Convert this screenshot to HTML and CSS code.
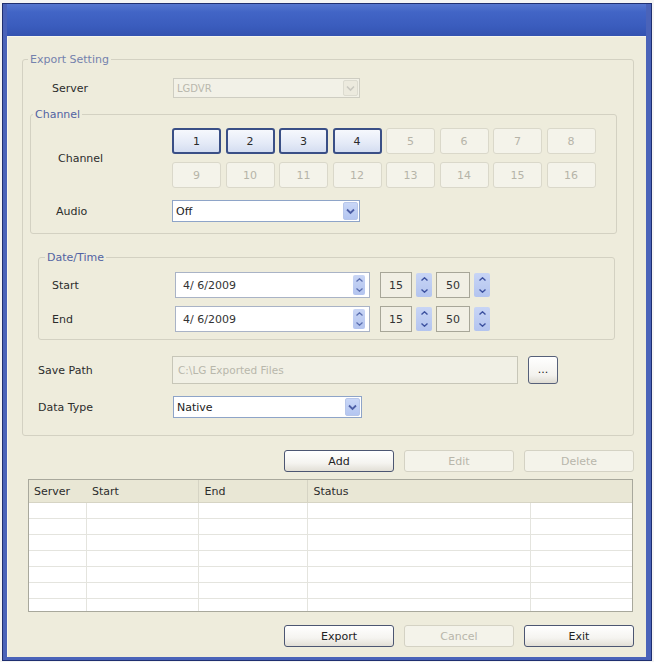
FILE: index.html
```html
<!DOCTYPE html>
<html>
<head>
<meta charset="utf-8">
<link rel="stylesheet" href="styles.css">
</head>
<body>
<div class="window">
  <div class="titlebar"></div>
  <div class="client">
    <fieldset class="group group-outer">
      <legend class="legend legend-faint">Export Setting</legend>
      <div class="row row-server">
        <span class="label label-server">Server</span>
        <div class="combo combo-disabled combo-server">
          <span class="combo-text">LGDVR</span>
          <span class="combo-btn"><svg width="9" height="7" viewBox="0 0 9 7"><path d="M1 1.5 L4.5 5 L8 1.5" fill="none" stroke="#c9c8c0" stroke-width="1.6"/></svg></span>
        </div>
      </div>

      <fieldset class="group group-channel">
        <legend class="legend">Channel</legend>
        <div class="row row-channels">
          <span class="label label-channel">Channel</span>
          <div class="channel-grid">
            <button class="ch ch-on">1</button>
            <button class="ch ch-on">2</button>
            <button class="ch ch-on">3</button>
            <button class="ch ch-on">4</button>
            <button class="ch ch-off">5</button>
            <button class="ch ch-off">6</button>
            <button class="ch ch-off">7</button>
            <button class="ch ch-off">8</button>
            <button class="ch ch-off">9</button>
            <button class="ch ch-off">10</button>
            <button class="ch ch-off">11</button>
            <button class="ch ch-off">12</button>
            <button class="ch ch-off">13</button>
            <button class="ch ch-off">14</button>
            <button class="ch ch-off">15</button>
            <button class="ch ch-off">16</button>
          </div>
        </div>
        <div class="row row-audio">
          <span class="label label-audio">Audio</span>
          <div class="combo combo-audio">
            <span class="combo-text">Off</span>
            <span class="combo-btn combo-btn-blue"><svg width="9" height="7" viewBox="0 0 9 7"><path d="M1 1.5 L4.5 5 L8 1.5" fill="none" stroke="#4d5fa6" stroke-width="1.8"/></svg></span>
          </div>
        </div>
      </fieldset>

      <fieldset class="group group-date">
        <legend class="legend legend-date">Date/Time</legend>
        <div class="row row-dt row-start">
          <span class="label label-dt">Start</span>
          <div class="datefield">
            <span class="date-text">4/ 6/2009</span>
            <span class="spin spin-inner">
              <span class="spin-half"><svg width="7" height="4" viewBox="0 0 7 4"><path d="M0.5 3.5 L3.5 0.8 L6.5 3.5" fill="none" stroke="#5b6fb0" stroke-width="1.3"/></svg></span>
              <span class="spin-half"><svg width="7" height="4" viewBox="0 0 7 4"><path d="M0.5 0.5 L3.5 3.2 L6.5 0.5" fill="none" stroke="#5b6fb0" stroke-width="1.3"/></svg></span>
            </span>
          </div>
          <div class="numfield num-hour">15</div>
          <span class="spin spin-outer">
            <span class="spin-half"><svg width="7" height="4" viewBox="0 0 7 4"><path d="M0.5 3.5 L3.5 0.8 L6.5 3.5" fill="none" stroke="#3d52a0" stroke-width="1.4"/></svg></span>
            <span class="spin-half"><svg width="7" height="4" viewBox="0 0 7 4"><path d="M0.5 0.5 L3.5 3.2 L6.5 0.5" fill="none" stroke="#3d52a0" stroke-width="1.4"/></svg></span>
          </span>
          <div class="numfield num-min">50</div>
          <span class="spin spin-outer">
            <span class="spin-half"><svg width="7" height="4" viewBox="0 0 7 4"><path d="M0.5 3.5 L3.5 0.8 L6.5 3.5" fill="none" stroke="#3d52a0" stroke-width="1.4"/></svg></span>
            <span class="spin-half"><svg width="7" height="4" viewBox="0 0 7 4"><path d="M0.5 0.5 L3.5 3.2 L6.5 0.5" fill="none" stroke="#3d52a0" stroke-width="1.4"/></svg></span>
          </span>
        </div>
        <div class="row row-dt row-end">
          <span class="label label-dt">End</span>
          <div class="datefield">
            <span class="date-text">4/ 6/2009</span>
            <span class="spin spin-inner">
              <span class="spin-half"><svg width="7" height="4" viewBox="0 0 7 4"><path d="M0.5 3.5 L3.5 0.8 L6.5 3.5" fill="none" stroke="#5b6fb0" stroke-width="1.3"/></svg></span>
              <span class="spin-half"><svg width="7" height="4" viewBox="0 0 7 4"><path d="M0.5 0.5 L3.5 3.2 L6.5 0.5" fill="none" stroke="#5b6fb0" stroke-width="1.3"/></svg></span>
            </span>
          </div>
          <div class="numfield num-hour">15</div>
          <span class="spin spin-outer">
            <span class="spin-half"><svg width="7" height="4" viewBox="0 0 7 4"><path d="M0.5 3.5 L3.5 0.8 L6.5 3.5" fill="none" stroke="#3d52a0" stroke-width="1.4"/></svg></span>
            <span class="spin-half"><svg width="7" height="4" viewBox="0 0 7 4"><path d="M0.5 0.5 L3.5 3.2 L6.5 0.5" fill="none" stroke="#3d52a0" stroke-width="1.4"/></svg></span>
          </span>
          <div class="numfield num-min">50</div>
          <span class="spin spin-outer">
            <span class="spin-half"><svg width="7" height="4" viewBox="0 0 7 4"><path d="M0.5 3.5 L3.5 0.8 L6.5 3.5" fill="none" stroke="#3d52a0" stroke-width="1.4"/></svg></span>
            <span class="spin-half"><svg width="7" height="4" viewBox="0 0 7 4"><path d="M0.5 0.5 L3.5 3.2 L6.5 0.5" fill="none" stroke="#3d52a0" stroke-width="1.4"/></svg></span>
          </span>
        </div>
      </fieldset>

      <div class="row row-path">
        <span class="label label-path">Save Path</span>
        <div class="pathfield">C:\LG Exported Files</div>
        <button class="btn btn-browse">...</button>
      </div>
      <div class="row row-type">
        <span class="label label-type">Data Type</span>
        <div class="combo combo-type">
          <span class="combo-text">Native</span>
          <span class="combo-btn combo-btn-blue"><svg width="9" height="7" viewBox="0 0 9 7"><path d="M1 1.5 L4.5 5 L8 1.5" fill="none" stroke="#4d5fa6" stroke-width="1.8"/></svg></span>
        </div>
      </div>
    </fieldset>

    <div class="btn-row btn-row-top">
      <button class="btn btn-on">Add</button>
      <button class="btn btn-off">Edit</button>
      <button class="btn btn-off">Delete</button>
    </div>

    <div class="list">
      <table class="list-table">
        <colgroup>
          <col class="col-server"><col class="col-start"><col class="col-end"><col class="col-status"><col class="col-extra">
        </colgroup>
        <thead>
          <tr><th class="th-server">Server</th><th>Start</th><th class="th-div">End</th><th class="th-div">Status</th><th class="th-last"></th></tr>
        </thead>
        <tbody>
          <tr><td></td><td></td><td></td><td></td><td></td></tr>
          <tr><td></td><td></td><td></td><td></td><td></td></tr>
          <tr><td></td><td></td><td></td><td></td><td></td></tr>
          <tr><td></td><td></td><td></td><td></td><td></td></tr>
          <tr><td></td><td></td><td></td><td></td><td></td></tr>
          <tr><td></td><td></td><td></td><td></td><td></td></tr>
          <tr><td></td><td></td><td></td><td></td><td></td></tr>
        </tbody>
      </table>
    </div>

    <div class="btn-row btn-row-bottom">
      <button class="btn btn-on">Export</button>
      <button class="btn btn-off">Cancel</button>
      <button class="btn btn-on">Exit</button>
    </div>
  </div>
</div>
</body>
</html>
```

FILE: styles.css
```css
html, body {
  margin: 0;
  padding: 0;
  background: #f4f4f4;
}
body {
  padding: 3px 0 0 2px;
  font-family: "DejaVu Sans", "Liberation Sans", sans-serif;
  font-size: 11px;
  color: #2a2a2a;
}
.window {
  width: 650px;
  height: 658px;
  box-sizing: border-box;
  border: 1px solid #1f2f70;
  background: #4a63b9;
  padding: 0 5px 3px 4px;
  display: flex;
  flex-direction: column;
}
.titlebar {
  height: 32px;
  flex: none;
  background: linear-gradient(180deg, #5676cf 0%, #4265c6 25%, #3a5cbd 70%, #3453b0 100%);
}
.client {
  flex: 1;
  background: #eeecdc;
  padding-top: 17px;
  box-sizing: border-box;
  box-shadow: inset 1px 1px 0 #f7f6ec;
}

/* group boxes */
.group {
  margin: 0;
  padding: 0;
  border: 1px solid #d3d1c2;
  border-radius: 3px;
  box-sizing: border-box;
  min-width: 0;
}
.legend {
  padding: 0 2px;
  line-height: 13px;
  height: 13px;
  font-size: 11px;
  color: #5263a3;
}
.legend-faint {
  color: #7482ad;
  margin-left: 5px;
}
.group-outer {
  margin-left: 15px;
  width: 612px;
  padding-bottom: 17px;
}
.group-channel {
  margin: 10px 0 0 7px;
  width: 587px;
  padding-top: 7px;
  padding-bottom: 11px;
}
.group-channel .legend {
  margin-left: 2px;
}
.group-date {
  margin: 17px 0 0 15px;
  width: 577px;
  padding-top: 8px;
  padding-bottom: 7px;
}
.legend-date {
  margin-left: 6px;
}

/* rows */
.row {
  display: flex;
  align-items: center;
}
.label {
  flex: none;
  color: #2c2c2c;
}
.row-server {
  margin-top: 12px;
  height: 20px;
  padding-left: 29px;
}
.label-server { width: 121px; }
.row-channels {
  padding-left: 27px;
}
.label-channel { width: 114px; }
.row-audio {
  margin-top: 12px;
  height: 22px;
  padding-left: 25px;
}
.label-audio { width: 116px; }
.row-dt {
  height: 26px;
  padding-left: 13px;
}
.row-end { margin-top: 8px; }
.label-dt { width: 123px; }
.row-path {
  margin-top: 16px;
  height: 28px;
  padding-left: 15px;
}
.label-path { width: 134px; }
.row-type {
  margin-top: 12px;
  height: 22px;
  padding-left: 15px;
}
.label-type { width: 135px; }

/* combos */
.combo {
  display: flex;
  align-items: center;
  box-sizing: border-box;
  height: 100%;
  border: 1px solid #8ea4c8;
  background: #ffffff;
  padding: 1px;
}
.combo-text {
  flex: 1;
  padding-left: 2px;
  color: #222;
}
.combo-btn {
  flex: none;
  width: 15px;
  height: 100%;
  display: flex;
  align-items: center;
  justify-content: center;
  border-radius: 2px;
}
.combo-btn-blue {
  background: linear-gradient(180deg, #c9d7f7 0%, #b4c6f1 100%);
  border: 1px solid #b7c6ea;
  box-sizing: border-box;
}
.combo-disabled {
  width: 187px;
  border-color: #cecdc2;
  background: #f2f1e7;
}
.combo-disabled .combo-text {
  color: #b9b8ad;
  font-size: 10px;
}
.combo-disabled .combo-btn {
  background: #eceade;
  border: 1px solid #dcdbd0;
  box-sizing: border-box;
}
.combo-audio { width: 188px; }
.combo-type { width: 189px; }

/* channel buttons */
.channel-grid {
  display: grid;
  grid-template-columns: repeat(8, 49px);
  grid-auto-rows: 26px;
  column-gap: 4.5px;
  row-gap: 8px;
}
.ch {
  margin: 0;
  padding: 0;
  font-family: inherit;
  font-size: 11px;
  border-radius: 3px;
}
.ch-on {
  border: 2px solid #3a4f86;
  background: linear-gradient(180deg, #f6f8fd 0%, #e4eaf7 60%, #d4ddf1 100%);
  color: #2a2a2a;
}
.ch-off {
  border: 1px solid #dad8ca;
  background: #f4f3ea;
  color: #b6b4a8;
}

/* date/time */
.datefield {
  width: 195px;
  height: 100%;
  box-sizing: border-box;
  border: 1px solid #a9b3c6;
  background: #ffffff;
  display: flex;
  align-items: center;
  padding-right: 4px;
}
.date-text {
  flex: 1;
  padding-left: 7px;
  color: #333;
}
.spin {
  display: flex;
  flex-direction: column;
  flex: none;
  box-sizing: border-box;
  border-radius: 2px;
  background: linear-gradient(180deg, #c8d5f5, #b3c4ef);
}
.spin-half {
  flex: 1;
  display: flex;
  align-items: center;
  justify-content: center;
}
.spin-inner {
  width: 12px;
  height: 20px;
}
.spin-outer {
  width: 16px;
  height: 24px;
  margin-left: 4px;
}
.numfield {
  height: 100%;
  box-sizing: border-box;
  border: 1px solid #a7a698;
  background: #f1efe4;
  display: flex;
  align-items: center;
  justify-content: center;
  color: #333;
}
.num-hour {
  width: 32px;
  margin-left: 10px;
}
.num-min {
  width: 34px;
  margin-left: 4px;
}

/* save path */
.pathfield {
  width: 346px;
  height: 100%;
  box-sizing: border-box;
  border: 1px solid #c7c6b8;
  background: #f1f0e5;
  color: #b8b7ab;
  display: flex;
  align-items: center;
  padding-left: 5px;
  font-size: 10.5px;
}
.btn {
  margin: 0;
  padding: 0;
  font-family: inherit;
  font-size: 11px;
  border-radius: 3px;
  box-sizing: border-box;
}
.btn-browse {
  margin-left: 10px;
  width: 30px;
  height: 28px;
  border: 1px solid #566079;
  background: linear-gradient(180deg, #ffffff 0%, #f3f2ee 70%, #dedbd2 100%);
  color: #222;
  line-height: 14px;
}

/* action buttons */
.btn-row {
  display: flex;
  justify-content: flex-end;
  gap: 10px;
  padding-right: 12px;
  height: 22px;
}
.btn-row-top { margin-top: 14px; }
.btn-row-bottom { margin-top: 13px; }
.btn-row .btn {
  width: 110px;
  height: 22px;
}
.btn-on {
  border: 1px solid #4c5672;
  background: linear-gradient(180deg, #ffffff 0%, #f5f4f0 60%, #e2dfd6 100%);
  color: #222;
}
.btn-off {
  border: 1px solid #d4d2c4;
  background: #f4f3ea;
  color: #b8b6aa;
}

/* list */
.list {
  margin: 7px 0 0 21px;
  width: 605px;
  height: 133px;
  box-sizing: border-box;
  border: 1px solid #a8a89c;
  background: #ffffff;
  overflow: hidden;
}
.list-table {
  border-collapse: collapse;
  table-layout: fixed;
  width: 603px;
}
.col-server { width: 57px; }
.col-start { width: 112px; }
.col-end { width: 109px; }
.col-status { width: 223px; }
.col-extra { width: 102px; }
.list-table th {
  height: 22px;
  padding: 0 0 0 6px;
  text-align: left;
  font-weight: normal;
  color: #2c2c2c;
  background: #e9e7d5;
  border-bottom: 1px solid #d6d4c4;
}
.list-table th.th-server { padding-left: 5px; }
.list-table th.th-div { border-left: 1px solid #d6d4c4; }
.list-table td {
  height: 15px;
  padding: 0;
  border-bottom: 1px solid #e4e4de;
  border-left: 1px solid #e4e4de;
}
.list-table td:first-child { border-left: none; }
```
